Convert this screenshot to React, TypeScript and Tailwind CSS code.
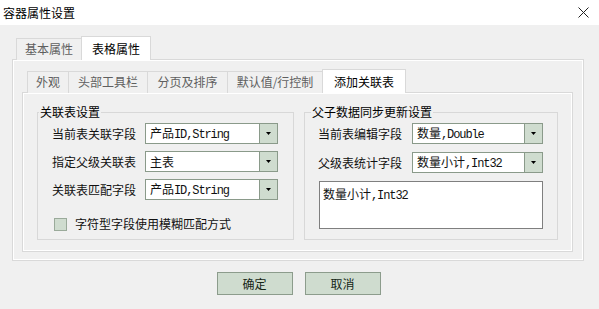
const cjk = "font-['Noto_Sans_CJK_SC',sans-serif]";
const mono = "font-['Liberation_Mono',monospace] text-[12px] tracking-[-1.1px]";

type Val = { zh: string; en?: string };

const Value = ({ v }: { v: Val }) => (
  <span className="whitespace-nowrap">
    {v.zh}
    {v.en && <span className={mono}>{v.en}</span>}
  </span>
);

const Combo = ({ value, width }: { value: Val; width: string }) => (
  <div className={`flex h-[21px] border border-[#8a9a8a] bg-white ${width}`}>
    <div className="flex flex-1 items-center pl-[4px]">
      <Value v={value} />
    </div>
    <div className="flex w-[18px] items-center justify-center border-l border-[#8a9a8a] bg-[#cfdccf]">
      <svg width="5" height="3" viewBox="0 0 5 3">
        <path d="M0 0h5L2.5 3z" fill="#000" />
      </svg>
    </div>
  </div>
);

const Row = ({ label, value, labelW, comboW }: { label: string; value: Val; labelW: string; comboW: string }) => (
  <div className="flex h-[21px] items-center">
    <div className={`${labelW} whitespace-nowrap`}>{label}</div>
    <Combo value={value} width={comboW} />
  </div>
);

const outerTabs = [
  { name: "基本属性", w: "w-[65px]" },
  { name: "表格属性", w: "w-[70px]", active: true },
];

const innerTabs = [
  { name: "外观", w: "w-[41px]" },
  { name: "头部工具栏", w: "w-[79px]" },
  { name: "分页及排序", w: "w-[80px]" },
  { name: "默认值/行控制", w: "w-[95px]" },
  { name: "添加关联表", w: "w-[84px]", active: true },
];

const Tab = ({ name, w, active }: { name: string; w: string; active?: boolean }) =>
  active ? (
    <div className={`relative z-10 flex h-[24px] items-center justify-center border border-b-0 border-[#d9d9d9] bg-white text-black ${w}`}>
      {name}
    </div>
  ) : (
    <div className={`flex h-[22px] items-center justify-center border-l border-t border-[#d9d9d9] bg-[#f0f0f0] pb-[1px] text-[#5f5f5f] ${w}`}>
      {name}
    </div>
  );

export default function App() {
  return (
    <div className={`flex h-[309px] w-[599px] flex-col bg-[#f0f0f0] text-[12px] leading-[14px] text-[#111] ${cjk}`}>
      {/* title bar */}
      <div className="flex h-[25px] items-center justify-between bg-white pl-[3px] pr-[10px]">
        <span className="text-black">容器属性设置</span>
        <svg width="11" height="11" viewBox="0 0 11 11">
          <path d="M0.5 0.5l10 10M10.5 0.5l-10 10" stroke="#222" strokeWidth="1" />
        </svg>
      </div>

      <div className="px-[12px] pt-[11px]">
        <div className="flex h-[24px] items-end pl-[4px]">
          {outerTabs.map((t) => (
            <Tab key={t.name} {...t} />
          ))}
        </div>

        <div className="-mt-px h-[202px] w-[572px] border border-[#d9d9d9] pl-[9px] pt-[9px] shadow-[inset_1px_1px_0_#fff,inset_-1px_-1px_0_#fff]">
          <div className="flex h-[24px] items-end pl-[5px]">
            {innerTabs.map((t) => (
              <Tab key={t.name} {...t} />
            ))}
          </div>

          <div className="-mt-px flex h-[160px] w-[551px] gap-[10px] border border-[#d9d9d9] px-[14px] shadow-[inset_1px_1px_0_#fff,inset_-1px_-1px_0_#fff]">
            <fieldset className="mt-[12px] h-[135px] w-[257px] border border-[#d8d8d8] pt-[4px] pl-[14px]">
              <legend className="-ml-[13px] px-[1px] leading-[14px] text-black">关联表设置</legend>
              <div className="flex flex-col gap-[7px]">
                <Row label="当前表关联字段" value={{ zh: "产品", en: "ID,String" }} labelW="w-[93px]" comboW="w-[133px]" />
                <Row label="指定父级关联表" value={{ zh: "主表" }} labelW="w-[93px]" comboW="w-[133px]" />
                <Row label="关联表匹配字段" value={{ zh: "产品", en: "ID,String" }} labelW="w-[93px]" comboW="w-[133px]" />
              </div>
              <label className="ml-[2px] mt-[17px] flex items-center gap-[8px]">
                <span className="h-[13px] w-[13px] border border-[#9aaa9a] bg-[#cfdccf]" />
                <span>字符型字段使用模糊匹配方式</span>
              </label>
            </fieldset>

            <fieldset className="mt-[12px] h-[135px] w-[254px] border border-[#d8d8d8] pt-[4px] pl-[13px]">
              <legend className="-ml-[7px] px-[1px] leading-[14px] text-black">父子数据同步更新设置</legend>
              <div className="flex flex-col gap-[8px]">
                <Row label="当前表编辑字段" value={{ zh: "数量", en: ",Double" }} labelW="w-[94px]" comboW="w-[131px]" />
                <Row label="父级表统计字段" value={{ zh: "数量小计", en: ",Int32" }} labelW="w-[94px]" comboW="w-[131px]" />
              </div>
              <div className="ml-[1px] mt-[8px] h-[48px] w-[224px] border border-[#7f7f7f] bg-white px-[3px] pt-[5px]">
                <Value v={{ zh: "数量小计", en: ",Int32" }} />
              </div>
            </fieldset>
          </div>
        </div>

        <div className="mt-[11px] flex justify-center gap-[12px] pr-[2px]">
          {["确定", "取消"].map((b) => (
            <button
              key={b}
              className="flex h-[23px] w-[76px] items-center justify-center border border-[#8c9c8c] bg-[#cfdccf] text-[#162616]"
            >
              {b}
            </button>
          ))}
        </div>
      </div>
    </div>
  );
}
